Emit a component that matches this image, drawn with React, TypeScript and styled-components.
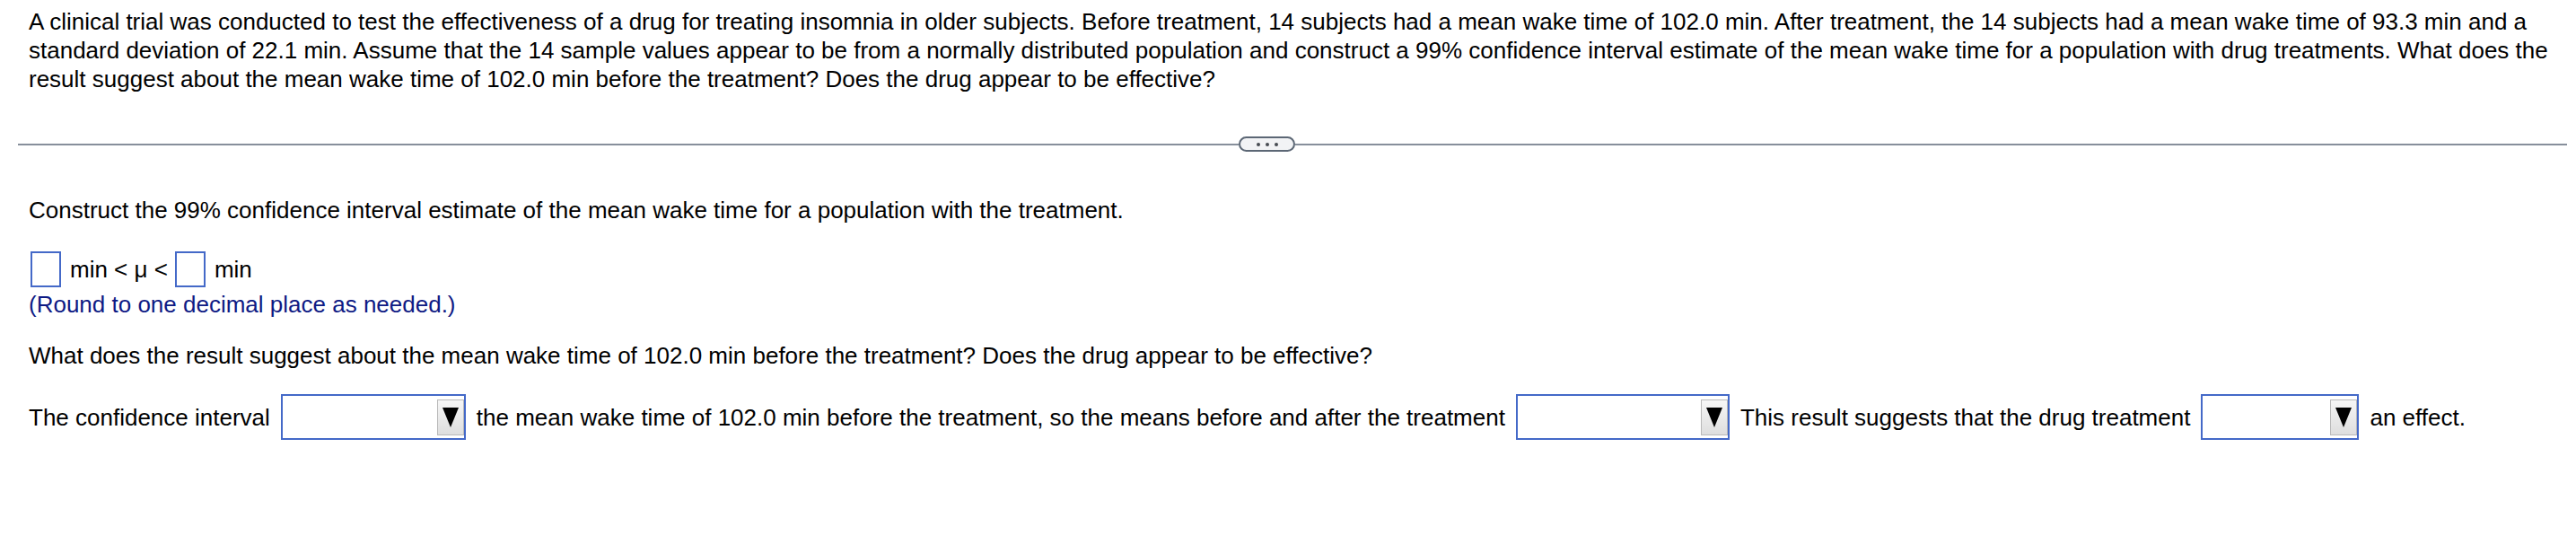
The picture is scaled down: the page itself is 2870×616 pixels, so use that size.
import React from 'react'
import styled, { createGlobalStyle } from 'styled-components'

const GlobalStyle = createGlobalStyle`
  html, body {
    margin: 0;
    padding: 0;
    background: #fff;
  }
  body {
    font-family: "Liberation Sans", Arial, sans-serif;
    font-size: 26px;
    line-height: 32px;
    color: #000;
  }
`

const Page = styled.div`
  padding: 8px 10px 0 20px;
`

const Question = styled.p`
  margin: 0;
  padding: 0 12px;
`

const Divider = styled.div`
  display: flex;
  align-items: center;
  height: 17px;
  margin-top: 48px;
`

const Rule = styled.div<{ $width?: number }>`
  height: 2px;
  background: #878f9b;
  flex: ${p => (p.$width ? `0 0 ${p.$width}px` : '1 1 auto')};
`

const MorePill = styled.div`
  box-sizing: border-box;
  width: 63px;
  height: 17px;
  border: 2px solid #5c6775;
  border-radius: 9px;
  background: #f2f3f5;
  display: flex;
  align-items: center;
  justify-content: center;
  gap: 6px;
`

const Dot = styled.span`
  width: 4px;
  height: 4px;
  border-radius: 50%;
  background: #474c52;
`

const Body = styled.div`
  padding-left: 12px;
`

const Prompt = styled.div<{ $top: number }>`
  margin-top: ${p => p.$top}px;
  white-space: nowrap;
`

const Hint = styled.div`
  margin-top: 3px;
  color: #0e1a84;
`

const AnswerRow = styled.div`
  display: flex;
  align-items: center;
  height: 40px;
  margin-top: 30px;
  white-space: nowrap;
`

const AnswerBox = styled.span<{ $left: number; $right: number }>`
  box-sizing: border-box;
  width: 34px;
  height: 40px;
  border: 2px solid #4469c8;
  background: #fff;
  margin-left: ${p => p.$left}px;
  margin-right: ${p => p.$right}px;
`

const SelectRow = styled.div`
  display: flex;
  align-items: center;
  gap: 12px;
  height: 51px;
  margin-top: 27px;
  white-space: nowrap;
`

const Select = styled.div<{ $width: number }>`
  box-sizing: border-box;
  width: ${p => p.$width}px;
  height: 51px;
  border: 2px solid #4469c8;
  background: #fff;
  display: flex;
  align-items: center;
  justify-content: flex-end;
  flex: none;
`

const SelectButton = styled.span`
  box-sizing: border-box;
  width: 30px;
  height: 40px;
  border: 1px solid #b9b9b9;
  background: linear-gradient(#f6f6f6, #dedede);
  display: flex;
  align-items: center;
  justify-content: center;
  margin-top: 1px;
`

function Dropdown({ width }: { width: number }) {
  return (
    <Select $width={width}>
      <SelectButton>
        <svg width="18" height="22" viewBox="0 0 18 22">
          <polygon points="0,0 18,0 9,22" fill="#000" />
        </svg>
      </SelectButton>
    </Select>
  )
}

export default function App() {
  return (
    <>
      <GlobalStyle />
      <Page>
        <Question>
          A clinical trial was conducted to test the effectiveness of a drug for treating insomnia in older
          subjects. Before treatment, 14 subjects had a mean wake time of 102.0 min. After treatment, the 14
          subjects had a mean wake time of 93.3 min and a standard deviation of 22.1 min. Assume that the 14
          sample values appear to be from a normally distributed population and construct a 99% confidence
          interval estimate of the mean wake time for a population with drug treatments. What does the result
          suggest about the mean wake time of 102.0 min before the treatment? Does the drug appear to be
          effective?
        </Question>

        <Divider>
          <Rule $width={1360} />
          <MorePill>
            <Dot />
            <Dot />
            <Dot />
          </MorePill>
          <Rule />
        </Divider>

        <Body>
          <Prompt $top={49}>
            Construct the 99% confidence interval estimate of the mean wake time for a population with the
            treatment.
          </Prompt>

          <AnswerRow>
            <AnswerBox $left={2} $right={10} />
            <span>min &lt; μ &lt;</span>
            <AnswerBox $left={8} $right={10} />
            <span>min</span>
          </AnswerRow>
          <Hint>(Round to one decimal place as needed.)</Hint>

          <Prompt $top={25}>
            What does the result suggest about the mean wake time of 102.0 min before the treatment? Does the
            drug appear to be effective?
          </Prompt>

          <SelectRow>
            <span>The confidence interval</span>
            <Dropdown width={206} />
            <span>the mean wake time of 102.0 min before the treatment, so the means before and after the treatment</span>
            <Dropdown width={238} />
            <span>This result suggests that the drug treatment</span>
            <Dropdown width={176} />
            <span>an effect.</span>
          </SelectRow>
        </Body>
      </Page>
    </>
  )
}
